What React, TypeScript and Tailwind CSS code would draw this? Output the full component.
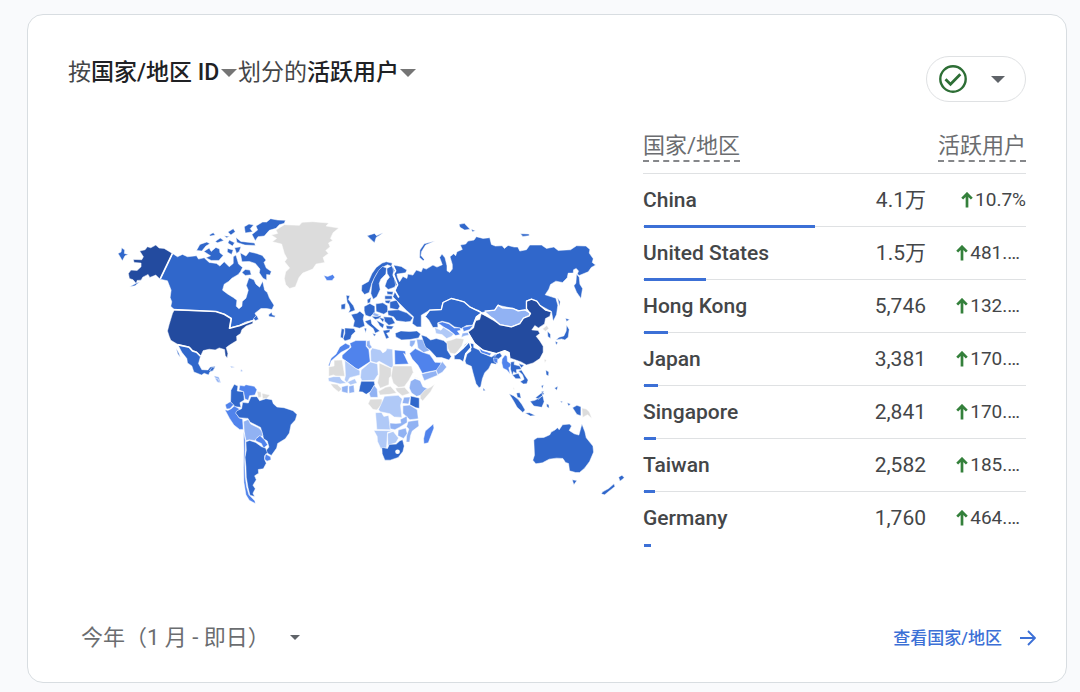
import { useState } from 'react';

type Shade = 'deep' | 'strong' | 'mid' | 'soft' | 'pale' | 'none';

const SHADES: Record<Shade, string> = {
  deep: 'fill-[#234b9f]',
  strong: 'fill-[#3067cb]',
  mid: 'fill-[#5083ec]',
  soft: 'fill-[#91b2f3]',
  pale: 'fill-[#b0c9f7]',
  none: 'fill-[#dcdcdc]',
};

// Each region has its own origin on the 1560x900 map canvas
const REGIONS: { name: string; origin: string; shapes: [Shade, string][] }[] = [
  {
    name: 'north-america',
    origin: 'translate(0 0)',
    shapes: [
      ['strong', 'M190 130 205 140 220 133 235 140 262 137 268 147 285 143 300 157 322 160 332 168 345 155 360 170 372 160 372 140 380 135 388 162 400 172 394 184 387 193 368 204 358 214 345 222 340 240 356 252 372 262 383 270 381 288 389 296 398 288 399 274 410 264 417 240 411 226 419 203 434 209 440 222 451 231 460 213 466 240 474 247 480 263 494 285 488 298 472 295 455 295 437 309 441 317 430 331 410 335 388 346 363 353 366 325 345 312 320 304 195 298 185 288 188 275 183 262 186 240 175 212 153 207Z'],
      ['deep', 'M92 123 108 119 115 110 125 113 140 105 150 114 165 115 190 130 153 207 140 195 122 202 117 193 101 201 96 210 84 211 82 221 72 209 61 205 58 190 66 180 84 181 96 170 96 159 75 157 73 148 98 149 103 140Z'],
      ['deep', 'M195 300 320 304 345 312 366 325 360 355 372 350 392 346 410 337 432 330 430 340 411 347 398 358 394 370 382 378 383 391 360 405 351 412 356 430 354 443 348 436 346 418 330 413 318 419 300 417 282 421 274 438 262 425 250 421 240 410 205 402 185 390 180 378 175 362 180 343 190 310Z'],
      ['strong', 'M207 405 240 410 250 421 262 425 274 438 268 460 278 478 296 479 303 470 318 468 313 480 302 485 298 494 285 489 277 494 254 485 248 467 235 458 233 445 218 426Z'],
      ['strong', 'M201 414 209 428 214 442 206 431Z'],
      ['strong', 'M27 130 36 126 38 113 47 120 46 130 58 133 48 137 40 152 33 140Z'],
      ['strong', 'M62 230 80 220 92 215 78 227Z'],
      ['strong', 'M428 73 445 60 440 48 460 36 472 36 484 26 505 30 528 31 525 40 510 44 500 55 480 61 465 78 446 80 438 92Z'],
      ['strong', 'M393 128 410 138 420 125 442 130 459 136 470 150 464 157 471 174 486 184 482 195 472 193 472 210 461 204 450 188 452 177 438 160 420 154 398 155Z'],
      ['strong', 'M262 121 272 103 293 96 302 101 290 108 278 123Z'],
      ['strong', 'M284 124 300 114 306 124 320 112 331 117 332 128 342 136 329 151 306 151 290 143 304 137Z'],
      ['strong', 'M300 75 312 68 318 75 304 78Z M318 94 333 84 344 91 325 98Z M345 77 361 79 352 83Z M356 66 372 56 378 65 365 75Z M360 90 376 98 370 108 356 99Z M355 115 372 120 367 133 354 126Z M380 82 395 94 436 99 438 106 407 105 383 97Z M405 50 419 42 433 45 423 56 430 65 408 69Z M376 113 395 110 390 124 382 130Z M408 178 422 180 426 194 408 196 398 187Z'],
      ['strong', 'M478 314 487 306 489 314 498 317 496 321 479 319Z M442 315 448 327 438 332 433 325Z'],
      ['soft', 'M314 496 329 500 335 518 324 514Z M363 468 377 470 367 472Z M394 479 401 484 395 484Z'],
    ],
  },
  {
    name: 'europe',
    origin: 'translate(450 0)',
    shapes: [
      ['none', 'M36 75 55 70 50 60 75 44 120 46 128 37 160 35 208 39 200 48 238 54 221 68 213 85 220 91 207 99 212 110 199 121 207 130 191 142 196 157 170 162 160 177 130 189 119 202 108 230 91 235 79 223 75 205 79 185 91 174 76 155 83 145 75 130 67 102 39 95 52 85Z'],
      ['mid', 'M193 196 205 199 220 193 226 201 218 211 202 211Z'],
      ['strong', 'M323 77 345 70 351 77 370 68 364 73 350 82 345 98 334 88Z'],
      ['strong', 'M526 93 498 105 486 124 484 136 494 148 491 152 480 142 481 120 494 101Z'],
      ['strong', 'M307 225 327 214 337 191 350 172 368 159 380 155 398 159 396 169 384 164 372 170 352 190 337 219 329 247 315 253 306 242Z'],
      ['strong', 'M357 181 369 169 381 174 379 192 364 207 359 220 362 238 352 260 341 267 334 250 337 222 344 204Z'],
      ['strong', 'M382 175 397 167 403 179 400 196 412 218 405 231 386 238 376 228 382 211 390 201 383 190Z'],
      ['strong', 'M382 243 401 245 399 254 383 252Z M376 257 398 257 398 267 376 267Z M376 271 393 270 390 281 378 278Z'],
      ['strong', 'M391 275 411 270 421 288 415 299 391 294Z'],
      ['strong', 'M349 281 370 278 384 287 385 304 373 312 350 304Z'],
      ['strong', 'M323 269 335 261 332 277 324 280Z M314 289 331 280 346 288 346 308 332 320 318 315 314 302Z'],
      ['strong', 'M275 313 293 309 301 303 314 314 311 327 316 347 300 354 281 349 285 332Z'],
      ['strong', 'M256 353 284 355 288 364 277 374 273 387 256 392 251 385 256 370Z M246 355 255 357 251 385 243 381Z'],
      ['strong', 'M260 255 271 257 267 268 282 287 287 300 267 308 272 297 268 284 263 276Z M245 283 258 280 257 297 245 297Z'],
      ['strong', 'M316 333 334 327 337 341 352 355 361 362 347 369 341 355 325 343Z M339 369 350 373 344 378Z M314 354 321 354 319 368Z'],
      ['soft', 'M343 307 361 314 353 320 339 315Z'],
      ['strong', 'M336 318 352 319 365 316 362 324 347 328Z M351 330 374 343 370 354 361 347Z'],
      ['strong', 'M372 320 397 321 407 339 388 345 375 333Z M359 322 375 326 370 336Z M379 346 403 348 396 357 382 356Z'],
      ['strong', 'M384 301 417 299 442 308 460 323 452 334 438 335 423 333 411 332 402 320 386 315Z'],
      ['strong', 'M370 361 392 358 390 366 381 369 389 382 380 386Z'],
      ['strong', 'M407 369 424 362 450 364 472 362 483 371 477 383 451 388 426 389 409 380Z'],
      ['soft', 'M451 391 468 390 465 401 457 411 450 406Z M471 387 490 388 500 410 510 421 492 427 475 413Z'],
      ['mid', 'M450 430 467 415 489 426 510 433 519 445 526 456 544 457 542 478 508 484 488 489 475 465 458 446Z'],
      ['soft', 'M486 491 530 481 534 495 494 511Z M530 480 548 454 561 470 548 486 534 493Z'],
    ],
  },
  {
    name: 'asia',
    origin: 'translate(960 15)',
    shapes: [
      ['strong', 'M-110 150-85 154-68 165-72 173-98 177-96 187-90 200-80 184-68 190-65 177-50 180-40 165-25 170-20 158-10 162 10 150 22 156 38 149 30 127 37 117 46 128 52 152 52 167 60 172 68 162 68 148 61 125 72 116 78 122 82 110 98 103 92 90 108 87 115 78 133 75 140 65 160 70 180 68 185 88 197 93 217 92 224 100 235 91 253 96 264 96 270 108 290 104 300 90 335 90 350 100 372 96 385 106 422 104 440 92 468 93 480 103 478 114 490 131 487 142 497 150 484 157 475 170 448 181 442 177 446 168 439 160 431 164 430 174 415 174 412 188 398 202 378 198 362 208 357 222 346 239 365 245 378 249 384 270 380 298 370 318 365 289 330 270 305 252 290 257 291 282 280 290 250 280 205 270 195 285 155 292 143 285 120 275 100 260 85 255 65 250 40 262 35 283 0 285-25 300-25 335-38 335-52 325-48 305-70 285-90 265-110 245-100 220-108 175Z'],
      ['strong', 'M440 177 448 186 450 207 458 220 453 250 440 231 432 212 438 204Z'],
      ['strong', 'M88 28 104 25 121 43 105 45 91 37Z M125 43 137 47 128 50Z M272 56 298 57 298 62 279 64Z M383 248 391 260 389 274Z'],
      ['strong', 'M0 285 35 283 40 262 65 250 85 255 103 260 120 275 155 292 140 305 130 330 110 331 96 340 75 335 58 323 37 318 24 323 25 336 10 337-2 315-13 303Z'],
      ['mid', 'M25 323 38 320 58 326 74 338 91 338 93 345 83 347 91 358 78 361 58 344 43 336Z M98 337 131 330 120 343 102 349Z'],
      ['pale', 'M15 337 34 345 41 336 72 356 65 364 51 370 37 358 19 355Z'],
      ['soft', 'M98 354 119 351 118 359 102 363 95 367Z'],
      ['soft', 'M165 288 195 285 205 270 218 278 250 280 265 287 286 284 302 294 298 302 281 309 270 325 245 335 210 328 190 310Z'],
      ['deep', 'M155 295 190 315 210 328 245 335 270 325 281 309 302 297 290 280 290 258 305 252 321 258 330 270 348 285 364 289 360 303 347 310 344 326 326 338 315 331 306 344 325 346 330 355 319 363 330 377 340 393 340 411 330 430 310 443 290 449 274 440 260 435 240 428 238 412 225 406 200 415 160 405 135 385 115 351 132 338 137 317 150 313Z'],
      ['strong', 'M120 383 132 386 132 397 148 404 153 412 185 425 193 420 210 412 217 422 204 433 199 447 185 444 177 460 165 472 158 490 153 514 148 517 139 505 130 473 125 453 109 446 106 437 112 416 124 407Z'],
      ['strong', 'M74 432 74 420 86 413 100 399 106 388 119 379 124 397 108 415 102 440 91 433Z'],
      ['mid', 'M149 400 185 415 180 421 154 412Z M189 421 200 416 197 423Z'],
      ['none', 'M50 378 66 374 80 369 93 370 103 372 97 391 84 408 76 416 61 413 54 398Z'],
      ['strong', 'M-25 359-10 364 3 374 20 370 42 376 52 385 53 405 65 424 58 434 36 427 21 427 1 405-12 396-18 381Z'],
      ['mid', 'M216 443 217 431 226 419 232 423 233 438 248 449 237 457 241 476 231 464 220 459Z M191 428 203 429 204 444 193 440Z'],
      ['strong', 'M243 440 254 439 253 448 270 452 275 462 260 463 261 475 251 469 248 481 242 461Z M267 445 283 450 274 458Z M275 464 288 484 295 494 291 505 281 506 271 499 283 492 278 478 266 467Z M248 479 266 474 274 490 258 490Z'],
      ['none', 'M338 341 351 331 357 340 347 348Z'],
      ['strong', 'M353 348 362 357 362 370 354 364Z M407 309 419 313 410 319Z M410 329 418 343 415 366 405 374 395 371 378 374 388 366 402 362 409 347Z M376 378 384 382 379 389Z'],
      ['strong', 'M348 464 357 470 356 482 349 478Z M374 518 384 513 381 525Z M334 512 341 508 338 520Z M160 517 167 525 161 527Z'],
      ['none', 'M343 432 350 434 345 443Z M252 515 254 522 250 522Z'],
    ],
  },
  {
    name: 'south-america',
    origin: 'translate(300 450)',
    shapes: [
      ['strong', 'M65 90 75 72 86 77 84 92 103 94 105 119 92 127 95 141 77 139 64 125Z'],
      ['mid', 'M92 75 105 77 110 73 135 78 143 88 137 104 121 106 117 120 107 116 103 94 89 89Z'],
      ['none', 'M143 93 155 95 156 110 147 112Z M158 99 182 104 172 115 160 115Z'],
      ['mid', 'M48 133 63 124 73 133 62 145 52 146Z M47 148 56 150 66 145 75 137 91 146 80 158 90 173 100 176 102 207 91 207 74 194 61 174Z'],
      ['strong', 'M100 126 117 128 125 109 143 109 151 121 170 115 188 118 192 130 203 140 224 142 251 151 263 162 258 179 245 193 240 218 228 235 205 249 202 263 186 285 167 274 179 260 174 242 163 235 154 201 122 185 116 174 90 172 79 158 83 151 97 145Z'],
      ['soft', 'M103 183 117 177 124 191 149 203 157 212 161 226 145 230 138 241 120 238 110 241 105 215Z'],
      ['mid', 'M139 236 152 225 166 239 175 253 163 263 156 249 140 242Z'],
      ['strong', 'M110 244 121 240 139 246 157 259 169 263 174 277 166 286 166 298 171 308 162 325 147 327 148 338 136 346 141 358 131 374 138 385 131 398 136 408 122 404 116 380 111 350 110 319 107 290 111 270Z'],
      ['mid', 'M103 213 108 240 108 270 106 300 108 350 112 379 119 403 137 421 138 429 120 419 110 403 104 366 103 321 104 270Z'],
      ['mid', 'M169 281 184 289 185 298 173 302 166 296Z'],
      ['strong', 'M1 31 10 20 16 23 9 33Z'],
      ['soft', 'M17 53 27 56 32 68 24 65Z M64 17 76 21 66 22Z M95 26 101 32 95 33Z'],
    ],
  },
  {
    name: 'africa',
    origin: 'translate(630 360)',
    shapes: [
      ['mid', 'M61 50 78 39 92 46 90 53 65 66 35 92 30 108 27 106 35 84 50 71Z'],
      ['none', 'M28 110 44 107 44 90 68 89 76 138 49 137 42 134 28 138Z'],
      ['mid', 'M68 75 95 51 91 39 109 31 140 31 140 48 148 58 152 94 117 117 110 115 68 84Z'],
      ['soft', 'M142 32 151 31 152 43 158 51 150 56 141 46Z'],
      ['pale', 'M153 62 158 53 183 59 190 68 199 62 202 55 219 57 221 111 214 112 179 93 170 98 154 93Z'],
      ['mid', 'M225 59 257 62 259 74 252 69 267 101 226 103Z'],
      ['pale', 'M76 90 108 114 121 121 121 134 91 142 83 157 75 149 78 136Z'],
      ['pale', 'M125 119 153 95 174 101 176 132 164 150 127 151 123 141Z'],
      ['none', 'M179 98 215 114 215 137 209 143 208 163 182 174 174 157 179 133Z'],
      ['none', 'M220 107 276 107 281 126 268 150 254 169 236 171 221 158 215 137Z'],
      ['none', 'M177 183 198 171 213 168 231 188 210 192 181 194Z M228 173 255 171 271 189 248 196 231 182Z'],
      ['soft', 'M273 153 286 145 302 151 310 169 328 177 309 193 291 198 276 188 269 173Z'],
      ['none', 'M316 179 334 170 345 162 333 184 309 212 302 204 302 195Z M283 139 305 148 289 141Z'],
      ['pale', 'M26 143 42 139 61 139 67 149 81 158 62 161 41 156 28 153Z M84 155 106 145 113 158 93 164Z'],
      ['none', 'M33 160 53 162 67 176 58 185 42 172Z'],
      ['soft', 'M67 169 86 165 85 189 67 184Z M88 168 103 164 105 186 89 189Z'],
      ['strong', 'M125 153 164 153 166 163 154 183 140 192 129 185 118 184 121 168Z'],
      ['soft', 'M164 165 173 176 175 201 153 201 149 190Z'],
      ['none', 'M152 207 187 206 188 220 172 239 160 237 146 220Z'],
      ['pale', 'M195 198 236 195 248 206 243 225 247 261 224 260 211 250 182 244 177 238Z'],
      ['pale', 'M168 247 186 246 193 258 207 255 210 276 213 298 172 297Z'],
      ['strong', 'M273 197 299 203 299 234 289 232 271 223Z'],
      ['soft', 'M253 201 272 200 267 221 248 219Z M250 226 270 224 293 238 296 265 271 268 250 249Z'],
      ['soft', 'M211 278 229 279 244 278 242 267 262 257 263 276 239 291 226 298 212 295Z M236 299 259 293 263 310 252 324 235 316Z'],
      ['soft', 'M266 273 296 269 298 287 278 302 273 315 270 335 260 335 261 317 268 296 261 289Z'],
      ['pale', 'M163 300 220 301 204 306 201 353 184 355 174 333 173 318Z M204 309 221 303 237 323 229 337 205 345Z'],
      ['strong', 'M187 351 204 354 209 342 230 341 241 331 249 328 254 347 250 363 236 381 212 389 196 389 188 370Z'],
      ['mid', 'M341 281 343 293 326 337 313 340 312 325 317 302Z'],
    ],
  },
  {
    name: 'oceania',
    origin: 'translate(1140 420)',
    shapes: [
      ['strong', 'M132 269 142 262 162 261 180 253 184 245 195 239 203 232 208 238 218 223 239 221 245 227 238 240 253 250 267 254 276 221 285 244 289 262 309 287 311 305 299 333 284 353 269 366 257 366 239 361 236 339 227 336 219 324 200 323 178 326 158 337 138 340 129 329 134 314Z'],
      ['strong', 'M247 388 261 390 252 403Z M396 374 403 382 390 392 386 380Z M372 400 375 408 357 422 344 433 334 430 338 424 356 414Z'],
      ['strong', 'M58 130 71 136 85 147 97 163 106 179 99 186 82 171 71 151Z M106 188 119 187 137 195 122 197Z M80 128 90 127 94 144 83 141Z'],
      ['strong', 'M121 153 135 150 159 136 163 154 156 171 132 167Z M137 142 158 125 163 130 147 147Z M154 124 162 122 158 134Z M170 160 177 163 178 174 171 169Z'],
      ['strong', 'M248 172 261 165 273 169 273 196 261 192Z M232 157 242 161 236 167Z M212 152 219 154 214 157Z'],
      ['none', 'M276 173 289 176 298 184 306 204 293 193 278 201Z'],
    ],
  },
];

const ROWS = [
  { country: 'China', label: '4.1万', users: 41000, change: '10.7%', clipped: false },
  { country: 'United States', label: '1.5万', users: 15000, change: '481.…', clipped: true },
  { country: 'Hong Kong', label: '5,746', users: 5746, change: '132.…', clipped: true },
  { country: 'Japan', label: '3,381', users: 3381, change: '170.…', clipped: true },
  { country: 'Singapore', label: '2,841', users: 2841, change: '170.…', clipped: true },
  { country: 'Taiwan', label: '2,582', users: 2582, change: '185.…', clipped: true },
  { country: 'Germany', label: '1,760', users: 1760, change: '464.…', clipped: true },
];

const TOTAL_USERS = 92000;

function Caret({ className }: { className: string }) {
  return (
    <svg viewBox="0 0 16 8" className={className} aria-hidden="true">
      <path d="M0 0h16L8 8z" fill="currentColor" />
    </svg>
  );
}

function WorldMap() {
  return (
    <svg viewBox="0 0 1560 900" className="block w-full" role="img" aria-label="活跃用户">
      {REGIONS.map(region => (
        <g key={region.name} transform={region.origin}>
          {region.shapes.map(([shade, d]) => (
            <path
              key={d}
              d={d}
              className={SHADES[shade]}
              stroke="#fff"
              strokeWidth="1.5"
              strokeLinejoin="round"
            />
          ))}
        </g>
      ))}
      {/* Heavier national borders */}
      <g fill="none" stroke="#fff" strokeWidth="5" strokeLinejoin="round">
        <path d="M190 130 153 207" />
        <path d="M190 298 320 304 345 312 366 325 361 354 392 346 434 330" />
        <path d="M205 403 240 411 250 422 262 426 274 438" />
        <path d="M850 165 858 182 852 192 864 224 855 240 868 262" />
      </g>
      <g fill="none" stroke="#fff" strokeWidth="4" strokeLinejoin="round" transform="translate(960 15)">
        <path d="M-13 303 0 285 35 283 40 262 65 250 85 255 103 260 120 275 155 292 143 285M165 288 195 285 205 270 218 278 250 280 265 287 286 284 302 294 298 302 281 309 270 325 245 335 210 328 190 310 155 294 140 305 130 330 137 317" />
        <path d="M302 297 290 280 290 258 305 252 321 258 330 270 348 285 364 289" />
        <path d="M115 351 135 385 160 405 200 415 225 406 238 412 240 428M75 420 100 399 119 379 124 397 108 415 102 440" />
      </g>
      <circle cx="864" cy="724" r="7" fill="#fff" />
    </svg>
  );
}

function CountryTable() {
  return (
    <table className="w-full table-fixed border-collapse text-left">
      <thead>
        <tr className="border-b border-[#dfe1e3] text-[22px] leading-7 text-[#6b6d70]">
          <th scope="col" className="pt-[30px] pb-[11px] font-normal">
            <div className="w-fit border-b-2 border-dashed border-[#85878a]">国家/地区</div>
          </th>
          <th scope="col" colSpan={2} className="w-[200px] pt-[30px] pb-[11px] font-normal">
            <div className="ml-auto w-fit border-b-2 border-dashed border-[#85878a]">活跃用户</div>
          </th>
        </tr>
      </thead>
      <tbody>
        {ROWS.map(row => (
          <tr key={row.country} className="relative h-[53px] border-b border-[#dfe1e3] text-[21px] leading-7 text-[#444648] last:border-b-0">
            <th scope="row" className="font-medium">
              {row.country}
              <div
                className="absolute -bottom-0.5 left-px h-[3px] bg-[#3c70d6]"
                style={{ width: `${(row.users / TOTAL_USERS) * 100}%` }}
              />
            </th>
            <td className="text-right">{row.label}</td>
            <td className="text-[19px]">
              <div className={`flex items-center justify-end gap-0.5 ${row.clipped ? 'pr-1.5' : ''}`}>
                <svg viewBox="0 0 12 16" className="h-4 w-3 text-[#34803b]" aria-hidden="true">
                  <path d="M6 15.500V2.500M1.200 6.600 6 1.800l4.800 4.800" fill="none" stroke="currentColor" strokeWidth="2.700" />
                </svg>
                {row.change}
              </div>
            </td>
          </tr>
        ))}
      </tbody>
    </table>
  );
}

export default function App() {
  const [dimension, setDimension] = useState('country');
  const [metric, setMetric] = useState('active');
  const [range, setRange] = useState('ytd');

  return (
    <main className="min-h-screen bg-[#f9fafc] pt-3.5 pr-[13px] pl-[27px] font-[Roboto,'Noto_Sans_CJK_SC',sans-serif]">
      <section className="rounded-2xl border border-[#d8dde1] bg-white pb-7">
        {/* Title and data quality */}
        <header className="flex items-start justify-between px-10 pt-[41px]">
          <h2 className="flex items-center text-[23px] leading-[34px] text-[#444648]">
            按
            <select
              aria-label="维度"
              value={dimension}
              onChange={e => setDimension(e.target.value)}
              className="appearance-none font-medium text-[#202124]"
            >
              <option value="country">国家/地区 ID</option>
            </select>
            <Caret className="mx-px h-2 w-4 text-[#757575]" />
            划分的
            <select
              aria-label="指标"
              value={metric}
              onChange={e => setMetric(e.target.value)}
              className="appearance-none font-medium text-[#202124]"
            >
              <option value="active">活跃用户</option>
            </select>
            <Caret className="mx-px h-2 w-4 text-[#757575]" />
          </h2>
          <button
            type="button"
            aria-label="数据质量"
            className="flex h-[46px] w-[100px] items-center justify-between rounded-full border border-[#dfe1e3] pr-5 pl-3"
          >
            <svg viewBox="0 0 28 28" className="size-7 text-[#2d6e35]" fill="none" stroke="currentColor" aria-hidden="true">
              <circle cx="14" cy="14" r="12.700" strokeWidth="2.400" />
              <path d="M6.500 14.300 11.500 19.200 21.300 9.300" strokeWidth="2.800" />
            </svg>
            <Caret className="h-[7px] w-3.5 text-[#5f6368]" />
          </button>
        </header>

        {/* Map and table */}
        <div className="flex items-start px-10">
          <div className="min-w-0 flex-1 pt-[108px] pr-[13px] pl-[41px]">
            <WorldMap />
          </div>
          <div className="w-[383px] shrink-0">
            <CountryTable />
          </div>
        </div>

        {/* Footer */}
        <footer className="mt-[77px] flex h-8 items-center justify-between pr-[30px] pl-[53px]">
          <label className="flex items-center gap-5 text-[#6b6d70]">
            <select
              aria-label="日期范围"
              value={range}
              onChange={e => setRange(e.target.value)}
              className="appearance-none text-[22px] leading-8"
            >
              <option value="ytd">今年（1 月 - 即日）</option>
            </select>
            <Caret className="h-[5px] w-2.5 text-[#5f6368]" />
          </label>
          <a href="#countries" className="flex items-center gap-[18px] text-[17px] leading-8 font-medium text-[#3c70d6]">
            查看国家/地区
            <svg viewBox="0 0 16 16" className="size-4" fill="none" stroke="currentColor" strokeWidth="1.900" aria-hidden="true">
              <path d="M0 8h14.500M8 1l7 7-7 7" />
            </svg>
          </a>
        </footer>
      </section>
    </main>
  );
}
